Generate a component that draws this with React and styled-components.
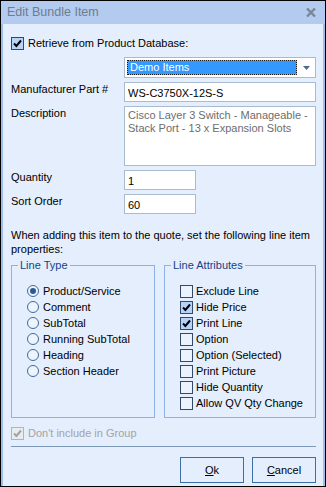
import React from 'react';
import styled, { createGlobalStyle } from 'styled-components';

const GlobalStyle = createGlobalStyle`
  html, body {
    margin: 0;
    padding: 0;
    background: #ffffff;
  }
  * {
    box-sizing: border-box;
  }
`;

// Fenêtre du dialogue
const Window = styled.div`
  width: 326px;
  height: 487px;
  border: 1px solid #000;
  display: flex;
  flex-direction: column;
  font-family: 'Liberation Sans', Arial, sans-serif;
  font-size: 11px;
  color: #000;
  background: #9fbde8;
`;

const TitleBar = styled.div`
  height: 23px;
  flex: none;
  display: flex;
  align-items: center;
  justify-content: space-between;
  padding: 0 9px 1px 6px;
  background: #b3cbef;
`;

const TitleText = styled.span`
  font-size: 12.5px;
  color: #6e7c8e;
`;

const Body = styled.div`
  flex: 1;
  margin: 0 2px 0 2px;
  padding: 13px 7px 0 8px;
  background: #e4eefc;
  display: flex;
  flex-direction: column;
`;

const CheckRow = styled.label`
  display: flex;
  align-items: center;
  gap: ${p => p.$gap || 4}px;
  height: ${p => p.$h || 13}px;
  color: ${p => (p.$disabled ? '#a3a3a3' : '#000')};
  line-height: 13px;
`;

const Box = styled.span`
  width: 13px;
  height: 13px;
  flex: none;
  display: flex;
  align-items: center;
  justify-content: center;
  border: 1px solid ${p => (p.$disabled ? '#b4b4b4' : '#33496a')};
  background: ${p => (p.$disabled ? '#e8ebef' : p.$checked ? '#b7d3f7' : '#eaf2fd')};
`;

const Radio = styled.span`
  width: 12px;
  height: 12px;
  flex: none;
  border-radius: 50%;
  border: 1px solid #3e6a9c;
  background: #eef4fc;
  display: flex;
  align-items: center;
  justify-content: center;

  &::after {
    content: '';
    width: 6px;
    height: 6px;
    border-radius: 50%;
    background: ${p => (p.$checked ? '#2c5a91' : 'transparent')};
  }
`;

const Fields = styled.div`
  margin-top: 7px;
  display: grid;
  grid-template-columns: 113px 1fr;
  row-gap: 4px;
`;

const Label = styled.span`
  padding-top: 1px;
  line-height: 13px;
`;

const Select = styled.div`
  height: 21px;
  border: 1px solid #a9bbd1;
  background: #fff;
  display: flex;
  align-items: center;
  padding: 0 0 0 2px;
`;

const Selected = styled.span`
  flex: 1;
  height: 15px;
  line-height: 13px;
  color: #fff;
  padding-left: 2px;
  border: 1px dotted #1a1a1a;
  background: linear-gradient(#3399ff, #3399ff) padding-box, #f09a2a border-box;
`;

const Arrow = styled.span`
  width: 18px;
  flex: none;
  display: flex;
  justify-content: center;
`;

const TextInput = styled.input`
  height: 20px;
  width: ${p => p.$w || '100%'};
  border: 1px solid #a9bbd1;
  background: #fff;
  font: inherit;
  color: #000;
  padding: 1px 2px 0 3px;
  margin: 0;
  outline: none;
`;

const TextArea = styled.textarea`
  height: 60px;
  width: 100%;
  border: 1px solid #a9bbd1;
  background: #fff;
  font: inherit;
  line-height: 13px;
  color: #6d6d6d;
  padding: 2px 3px;
  margin: 0;
  resize: none;
  outline: none;
  overflow: hidden;
`;

const Note = styled.p`
  margin: 14px 0 0 0;
  line-height: 14px;
`;

const Groups = styled.div`
  margin-top: 3px;
  display: grid;
  grid-template-columns: 144px 152px;
  column-gap: 9px;
`;

const Group = styled.fieldset`
  margin: 0;
  min-width: 0;
  height: 159px;
  border: 1px solid #8db2e3;
  padding: 0;
`;

const Legend = styled.legend`
  margin-left: 6px;
  padding: 0 2px;
  line-height: 13px;
  color: #15428b;
`;

const List = styled.div`
  display: flex;
  flex-direction: column;
  padding: 11px 0 0 15px;
`;

const Footer = styled.div`
  margin-top: 9px;
`;

const Separator = styled.div`
  margin-top: 6px;
  border-top: 1px solid #7d98b7;
`;

const Buttons = styled.div`
  margin-top: 10px;
  display: flex;
  justify-content: flex-end;
  gap: 8px;
`;

const Button = styled.button`
  width: 64px;
  height: 26px;
  border: 1px solid #3a6ea5;
  background: #e4eefc;
  font: inherit;
  color: #000;
  padding: 0;
`;

function Check() {
  return (
    <svg width="9" height="9" viewBox="0 0 9 9">
      <path d="M1 4.5 L3.4 7 L8 1.5" fill="none" stroke="currentColor" strokeWidth="2" />
    </svg>
  );
}

function CheckBox({ checked, disabled, children, gap, h }) {
  return (
    <CheckRow $disabled={disabled} $gap={gap} $h={h}>
      <Box $checked={checked} $disabled={disabled} style={{ color: disabled ? '#a3a3a3' : '#000' }}>
        {checked && <Check />}
      </Box>
      {children}
    </CheckRow>
  );
}

const lineTypes = ['Product/Service', 'Comment', 'SubTotal', 'Running SubTotal', 'Heading', 'Section Header'];
const attributes = [
  ['Exclude Line', false],
  ['Hide Price', true],
  ['Print Line', true],
  ['Option', false],
  ['Option (Selected)', false],
  ['Print Picture', false],
  ['Hide Quantity', false],
  ['Allow QV Qty Change', false],
];

function App() {
  return (
    <>
      <GlobalStyle />
      <Window>
        <TitleBar>
          <TitleText>Edit Bundle Item</TitleText>
          <svg width="10" height="9" viewBox="0 0 10 9">
            <path d="M1 0.5 L9 8.5 M9 0.5 L1 8.5" stroke="#7b8797" strokeWidth="2.4" />
          </svg>
        </TitleBar>

        <Body>
          <CheckBox checked>Retrieve from Product Database:</CheckBox>

          <Fields>
            <span />
            <Select>
              <Selected>Demo Items</Selected>
              <Arrow>
                <svg width="7" height="4" viewBox="0 0 7 4">
                  <path d="M0 0 H7 L3.5 4 Z" fill="#4c6a92" />
                </svg>
              </Arrow>
            </Select>

            <Label>Manufacturer Part #</Label>
            <TextInput value="WS-C3750X-12S-S" readOnly />

            <Label>Description</Label>
            <TextArea value={'Cisco Layer 3 Switch - Manageable - Stack Port - 13 x Expansion Slots'} readOnly />

            <Label>Quantity</Label>
            <TextInput $w="72px" value="1" readOnly />

            <Label>Sort Order</Label>
            <TextInput $w="72px" value="60" readOnly />
          </Fields>

          <Note>When adding this item to the quote, set the following line item properties:</Note>

          <Groups>
            <Group>
              <Legend>Line Type</Legend>
              <List>
                {lineTypes.map((t, i) => (
                  <CheckRow key={t} $h={16}>
                    <Radio $checked={i === 0} />
                    {t}
                  </CheckRow>
                ))}
              </List>
            </Group>
            <Group>
              <Legend>Line Attributes</Legend>
              <List>
                {attributes.map(([t, c]) => (
                  <CheckBox key={t} checked={c} gap={3} h={16}>{t}</CheckBox>
                ))}
              </List>
            </Group>
          </Groups>

          <Footer>
            <CheckBox checked disabled>Don't include in Group</CheckBox>
          </Footer>

          <Separator />

          <Buttons>
            <Button><u>O</u>k</Button>
            <Button><u>C</u>ancel</Button>
          </Buttons>
        </Body>
      </Window>
    </>
  );
}

export default App;
